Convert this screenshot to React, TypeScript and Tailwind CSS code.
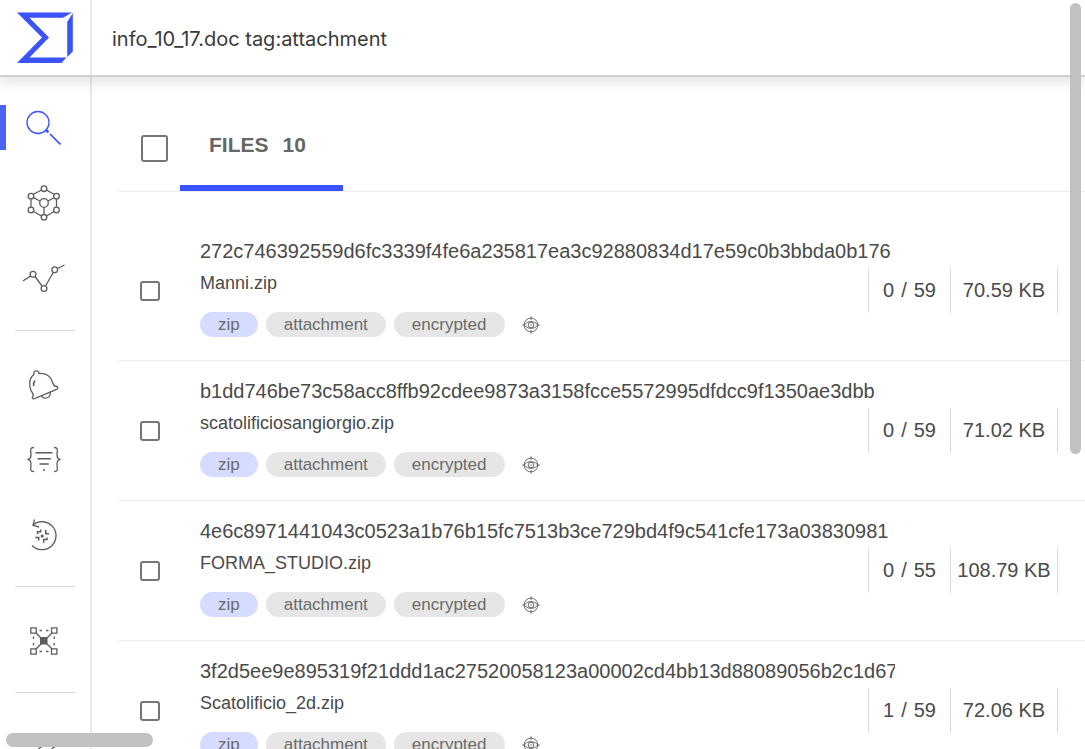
import { useState } from "react";
import type { ReactNode } from "react";
import clsx from "clsx";

interface FileResult {
  hash: string;
  name: string;
  tags: string[];
  detections: number;
  engines: number;
  size: string;
}

const files: FileResult[] = [
  {
    hash: "272c746392559d6fc3339f4fe6a235817ea3c92880834d17e59c0b3bbda0b176",
    name: "Manni.zip",
    tags: ["zip", "attachment", "encrypted"],
    detections: 0,
    engines: 59,
    size: "70.59 KB",
  },
  {
    hash: "b1dd746be73c58acc8ffb92cdee9873a3158fcce5572995dfdcc9f1350ae3dbb",
    name: "scatolificiosangiorgio.zip",
    tags: ["zip", "attachment", "encrypted"],
    detections: 0,
    engines: 59,
    size: "71.02 KB",
  },
  {
    hash: "4e6c8971441043c0523a1b76b15fc7513b3ce729bd4f9c541cfe173a03830981",
    name: "FORMA_STUDIO.zip",
    tags: ["zip", "attachment", "encrypted"],
    detections: 0,
    engines: 55,
    size: "108.79 KB",
  },
  {
    hash: "3f2d5ee9e895319f21ddd1ac27520058123a00002cd4bb13d88089056b2c1d67",
    name: "Scatolificio_2d.zip",
    tags: ["zip", "attachment", "encrypted"],
    detections: 1,
    engines: 59,
    size: "72.06 KB",
  },
];

function Logo() {
  return (
    <svg width="58" height="52" viewBox="0 0 58 52" fill="#3b53fb" aria-hidden="true">
      <path d="M1 0.5H56L47 5.8H13.5L33 25.5L13.5 45.5H50.5L45.5 51H1L26 25.5Z" />
      <path d="M56.800 1V39.500L51.200 45V10Z" />
    </svg>
  );
}

function Icon({ children }: { children: ReactNode }) {
  return (
    <svg
      width="44"
      height="44"
      viewBox="0 0 44 44"
      fill="none"
      stroke="currentColor"
      strokeWidth="1.3"
      aria-hidden="true"
    >
      {children}
    </svg>
  );
}

function SearchIcon() {
  return (
    <Icon>
      <circle cx="16" cy="16.500" r="11" />
      <path d="M23.500 24L26.500 26.300" strokeWidth="2.400" />
      <path d="M28 28L38.500 38.300" strokeWidth="1.700" />
    </Icon>
  );
}

function CubeIcon() {
  return (
    <Icon>
      <path d="M19.500 9L11.500 13.300M24.500 9L32 13.300M9 18.500V26M34.500 18.500V26M11.500 30.500L19.500 35M24.500 35L32 30.500M11.500 16.700L18 20M32 16.700L26 20M22 26.500V33.500" />
      <circle cx="22" cy="7.700" r="2.800" />
      <circle cx="9" cy="15.200" r="2.800" />
      <circle cx="34.500" cy="15.200" r="2.800" />
      <circle cx="22" cy="22" r="4.300" />
      <circle cx="9" cy="29" r="2.800" />
      <circle cx="34.500" cy="29" r="2.800" />
      <circle cx="22" cy="36.300" r="2.800" />
    </Icon>
  );
}

function TrendIcon() {
  return (
    <Icon>
      <path d="M1 25L8.500 20M13 20.500L20 30M23.500 30L31.300 16.500M35.500 12.500L42.500 9" />
      <circle cx="11" cy="18.200" r="2.900" />
      <circle cx="22" cy="32.500" r="2.900" />
      <circle cx="32.700" cy="13.800" r="2.900" />
    </Icon>
  );
}

function BellIcon() {
  return (
    <Icon>
      <path d="M12 12.500C10.500 8 17 7.500 17 11.500C24 11 28.500 14.500 30.500 20C31.500 23 32 24.500 34 24.200C36.300 24.200 36.300 26.800 34.500 27.300L12.500 36.700C10.500 37.300 9.500 35.300 11 34.300C12.300 33 10.500 31.500 9.300 29C7 24 6.500 16.500 12 12.500Z" />
      <path d="M13 18.500C11.700 20 11.300 22 11.700 24" strokeWidth="1.600" />
      <path d="M19.500 34C22 38 29.500 36 28 30" />
    </Icon>
  );
}

function BracesIcon() {
  return (
    <Icon>
      <path d="M12 10.500C7 10.500 9 14 9 17.500C9 20.500 8 22.500 5.500 22.500C8 22.500 9 24.500 9 27.500C9 31 7 34.500 12 34.500M32 10.500C37 10.500 35 14 35 17.500C35 20.500 36 22.500 38.500 22.500C36 22.500 35 24.500 35 27.500C35 31 37 34.500 32 34.500" />
      <path d="M13.500 15.800H30.500M15.500 21.700H28.800M17.500 27H26.800M21 33H23" strokeWidth="1.500" />
    </Icon>
  );
}

function RetroIcon() {
  return (
    <Icon>
      <path d="M11 13A14 14 0 1 1 10 33.500" />
      <path d="M12.500 7.500L11 13.300L17 15" />
      <path d="M15.500 22V19.800H18.700V17.500M23.700 18V21.700H27M13.300 25.500H16.700V28.500M21.700 30.800V27.500H25V25.500" strokeWidth="1.500" />
      <circle cx="20.200" cy="24" r="1.600" fill="currentColor" stroke="none" />
    </Icon>
  );
}

function GraphIcon() {
  return (
    <Icon>
      <path d="M14 15L30 31M30 15L14 31" />
      <path d="M18 19H25.500V26.500H18Z" fill="currentColor" stroke="none" />
      <path d="M8.800 9.800H14.200V15.200H8.800ZM29.500 9.800H34.900V15.200H29.500ZM8.800 30.800H14.200V36.200H8.800ZM29.500 30.800H34.900V36.200H29.500Z" />
      <path d="M17.500 12.500H20M24 12.500H26.500M17.500 33.500H20M24 33.500H26.500M11.500 18.500V21M11.500 25V27.500M32.200 18.500V21M32.200 25V27.500" />
    </Icon>
  );
}

function ToolsIcon() {
  return (
    <Icon>
      <path d="M15 27C16 25 17 24 20 22.500M28 27C29 25 30.500 24 33.500 22.500" />
    </Icon>
  );
}

function TargetIcon() {
  return (
    <svg width="18" height="18" viewBox="0 0 18 18" fill="none" stroke="currentColor" aria-hidden="true">
      <circle cx="9" cy="9" r="6.900" />
      <path d="M2 9C5.500 4.500 12.500 4.500 16 9C12.500 13.500 5.500 13.500 2 9Z" />
      <circle cx="9" cy="9" r="2.800" />
      <circle cx="9" cy="9" r="0.800" fill="currentColor" stroke="none" />
      <path d="M9 0.300V4M9 14V17.700M0.300 9H3.500M14.500 9H17.700" />
    </svg>
  );
}

interface NavItemProps {
  label: string;
  active?: boolean;
  children: ReactNode;
}

function NavItem({ label, active, children }: NavItemProps) {
  return (
    <a
      href="#"
      aria-label={label}
      className={clsx(
        "flex h-[75px] items-center",
        active ? "text-[#3b53fb]" : "text-[#5c5c5c]"
      )}
    >
      <span className={clsx("h-[45px] w-[6px]", active && "bg-[#4c63f8]")} />
      <span className="ml-4">{children}</span>
    </a>
  );
}

function NavDivider() {
  return <hr className="m-[15px] h-px border-0 bg-[#dadada]" />;
}

function Sidebar() {
  return (
    <nav className="w-[92px] shrink-0 border-r-2 border-[#e8e8e8] pt-[13px]">
      <NavItem label="Search" active>
        <SearchIcon />
      </NavItem>
      <NavItem label="Graph">
        <CubeIcon />
      </NavItem>
      <NavItem label="Trends">
        <TrendIcon />
      </NavItem>
      <NavDivider />
      <NavItem label="Notifications">
        <BellIcon />
      </NavItem>
      <NavItem label="Rules">
        <BracesIcon />
      </NavItem>
      <NavItem label="Retrohunt">
        <RetroIcon />
      </NavItem>
      <NavDivider />
      <NavItem label="Relations">
        <GraphIcon />
      </NavItem>
      <NavDivider />
      <NavItem label="Tools">
        <ToolsIcon />
      </NavItem>
    </nav>
  );
}

function FileRow({ file }: { file: FileResult }) {
  return (
    <li className="flex items-center border-b border-[#ececec] pr-[27px] pl-[22px]">
      <input
        type="checkbox"
        aria-label={`Select ${file.name}`}
        className="size-5 shrink-0 appearance-none rounded-[3px] border-2 border-[#757575] checked:bg-[#3b53fb]"
      />
      <div className="ml-10 min-w-0 flex-1 pt-[14px] pb-[23px]">
        <a
          href="#"
          className="-mr-[27px] block overflow-hidden text-[20px] leading-8 whitespace-nowrap"
        >
          {file.hash}
        </a>
        <p className="text-[18px] leading-8">{file.name}</p>
        <div className="mt-[13px] flex items-center gap-2 text-[17px] leading-[25px] text-[#6b6b6b]">
          {file.tags.map((tag) => (
            <a
              key={tag}
              href="#"
              className={clsx(
                "rounded-full px-[18px]",
                tag === "zip" ? "bg-[#d6dcff]" : "bg-[#e6e6e6]"
              )}
            >
              {tag}
            </a>
          ))}
          <button type="button" aria-label="Similar files" className="ml-[9px]">
            <TargetIcon />
          </button>
        </div>
      </div>
      <div className="flex shrink-0 text-center text-[20px] leading-[45px]">
        <div className="flex w-[82px] justify-center gap-[7px] border-l border-[#dcdcdc]">
          <span>{file.detections}</span>
          <span>/</span>
          <span>{file.engines}</span>
        </div>
        <div className="w-[108px] border-x border-[#dcdcdc]">{file.size}</div>
      </div>
    </li>
  );
}

export default function App() {
  const [query, setQuery] = useState("info_10_17.doc tag:attachment");

  return (
    <div className="relative flex h-screen flex-col overflow-hidden bg-white font-['Liberation_Sans',Arial,sans-serif] text-[#4a4a4a]">
      <header className="z-10 flex h-[77px] shrink-0 border-b-2 border-[#d0d0d0] bg-white shadow-[0_6px_12px_rgba(0,0,0,0.1)]">
        <a
          href="#"
          aria-label="Home"
          className="flex w-[92px] shrink-0 items-center border-r-2 border-[#e8e8e8] pl-4"
        >
          <Logo />
        </a>
        <input
          type="text"
          aria-label="Search query"
          value={query}
          onChange={(e) => setQuery(e.target.value)}
          className="min-w-0 flex-1 px-5 pt-[2px] font-['Inter',sans-serif] text-[20px] text-[#3a3a3a] outline-none"
        />
      </header>

      <div className="flex min-h-0 flex-1">
        <Sidebar />
        <main className="min-w-0 flex-1 overflow-hidden pl-[26px]">
          <div className="flex h-[115px] border-b border-[#ececec] pl-[23px]">
            <input
              type="checkbox"
              aria-label="Select all files"
              className="mt-[58px] size-[27px] shrink-0 appearance-none rounded-[3px] border-2 border-[#757575] checked:bg-[#3b53fb]"
            />
            <button
              type="button"
              className="ml-3 flex w-[163px] items-center gap-[14px] border-b-6 border-[#3b53fb] pt-7 pl-[29px] text-[21px] font-bold text-[#666666]"
            >
              <span>FILES</span>
              <span>10</span>
            </button>
          </div>
          <ul className="mt-[29px]">
            {files.map((file) => (
              <FileRow key={file.hash} file={file} />
            ))}
          </ul>
        </main>
      </div>

      {/* overlay scrollbars */}
      <div className="absolute top-[3px] right-1 z-20 h-[451px] w-[11px] rounded-full bg-[#c1c1c1]" />
      <div className="absolute bottom-[2px] left-[6px] z-20 h-[14px] w-[147px] rounded-full bg-[#c1c1c1]" />
    </div>
  );
}
